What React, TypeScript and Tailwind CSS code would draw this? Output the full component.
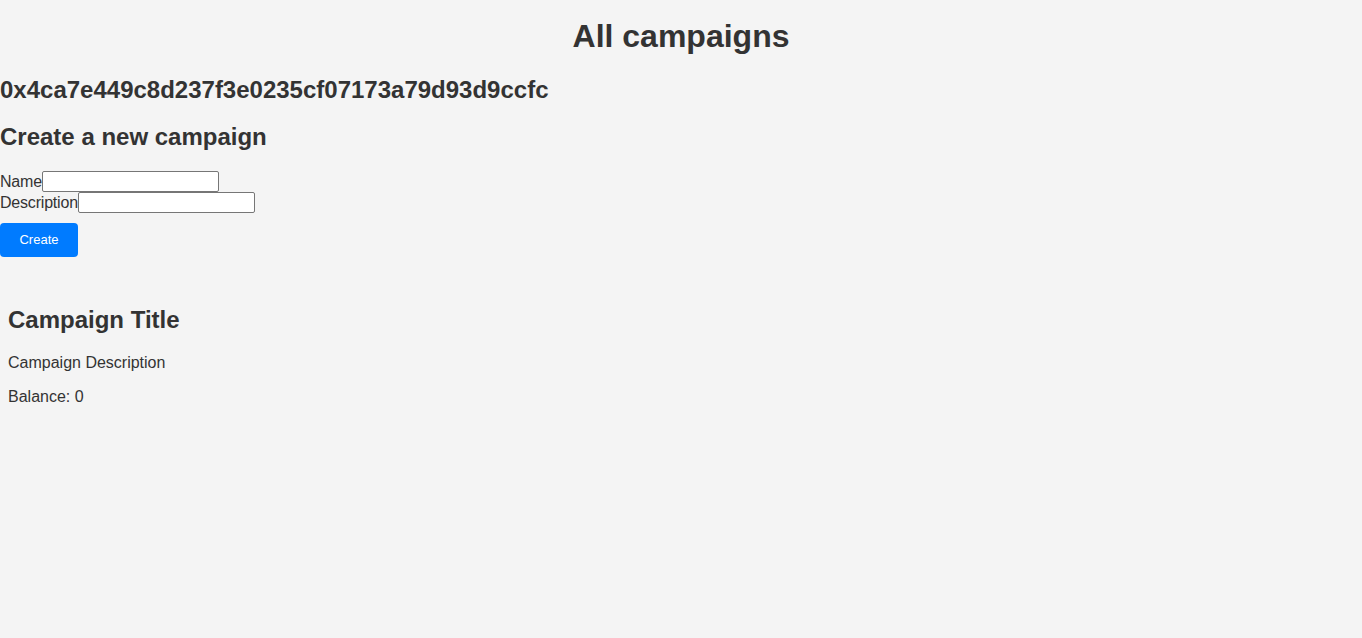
export default function App() {
  return (
    <div className="min-h-[638px] bg-[#f4f4f4] text-[#333] font-['Liberation_Sans',Arial,sans-serif]">
      <h1 className="pt-[18px] text-center text-[32px] leading-[36px] font-bold">All campaigns</h1>
      <h2 className="mt-[22px] text-[24px] leading-[28px] font-bold">0x4ca7e449c8d237f3e0235cf07173a79d93d9ccfc</h2>
      <h2 className="mt-[19px] text-[24px] leading-[28px] font-bold">Create a new campaign</h2>
      <form className="mt-[20px] text-[16px] tracking-[-0.2px]">
        <div className="flex items-center h-[21px]">
          <label>Name</label>
          <input type="text" className="w-[177px] h-[21px] bg-white border border-[#767676] rounded-[2px]" />
        </div>
        <div className="flex items-center h-[21px]">
          <label>Description</label>
          <input type="text" className="w-[177px] h-[21px] bg-white border border-[#767676] rounded-[2px]" />
        </div>
        <button type="button" className="mt-[10px] w-[78px] h-[34px] rounded-[4px] bg-[#007bff] text-white text-[13px] tracking-normal">
          Create
        </button>
      </form>
      <div className="mt-[49px] px-[8px]">
        <h2 className="text-[24px] leading-[28px] font-bold">Campaign Title</h2>
        <p className="mt-[20px] text-[16px] leading-[18px]">Campaign Description</p>
        <p className="mt-[16px] text-[16px] leading-[18px]">Balance: 0</p>
      </div>
    </div>
  )
}
